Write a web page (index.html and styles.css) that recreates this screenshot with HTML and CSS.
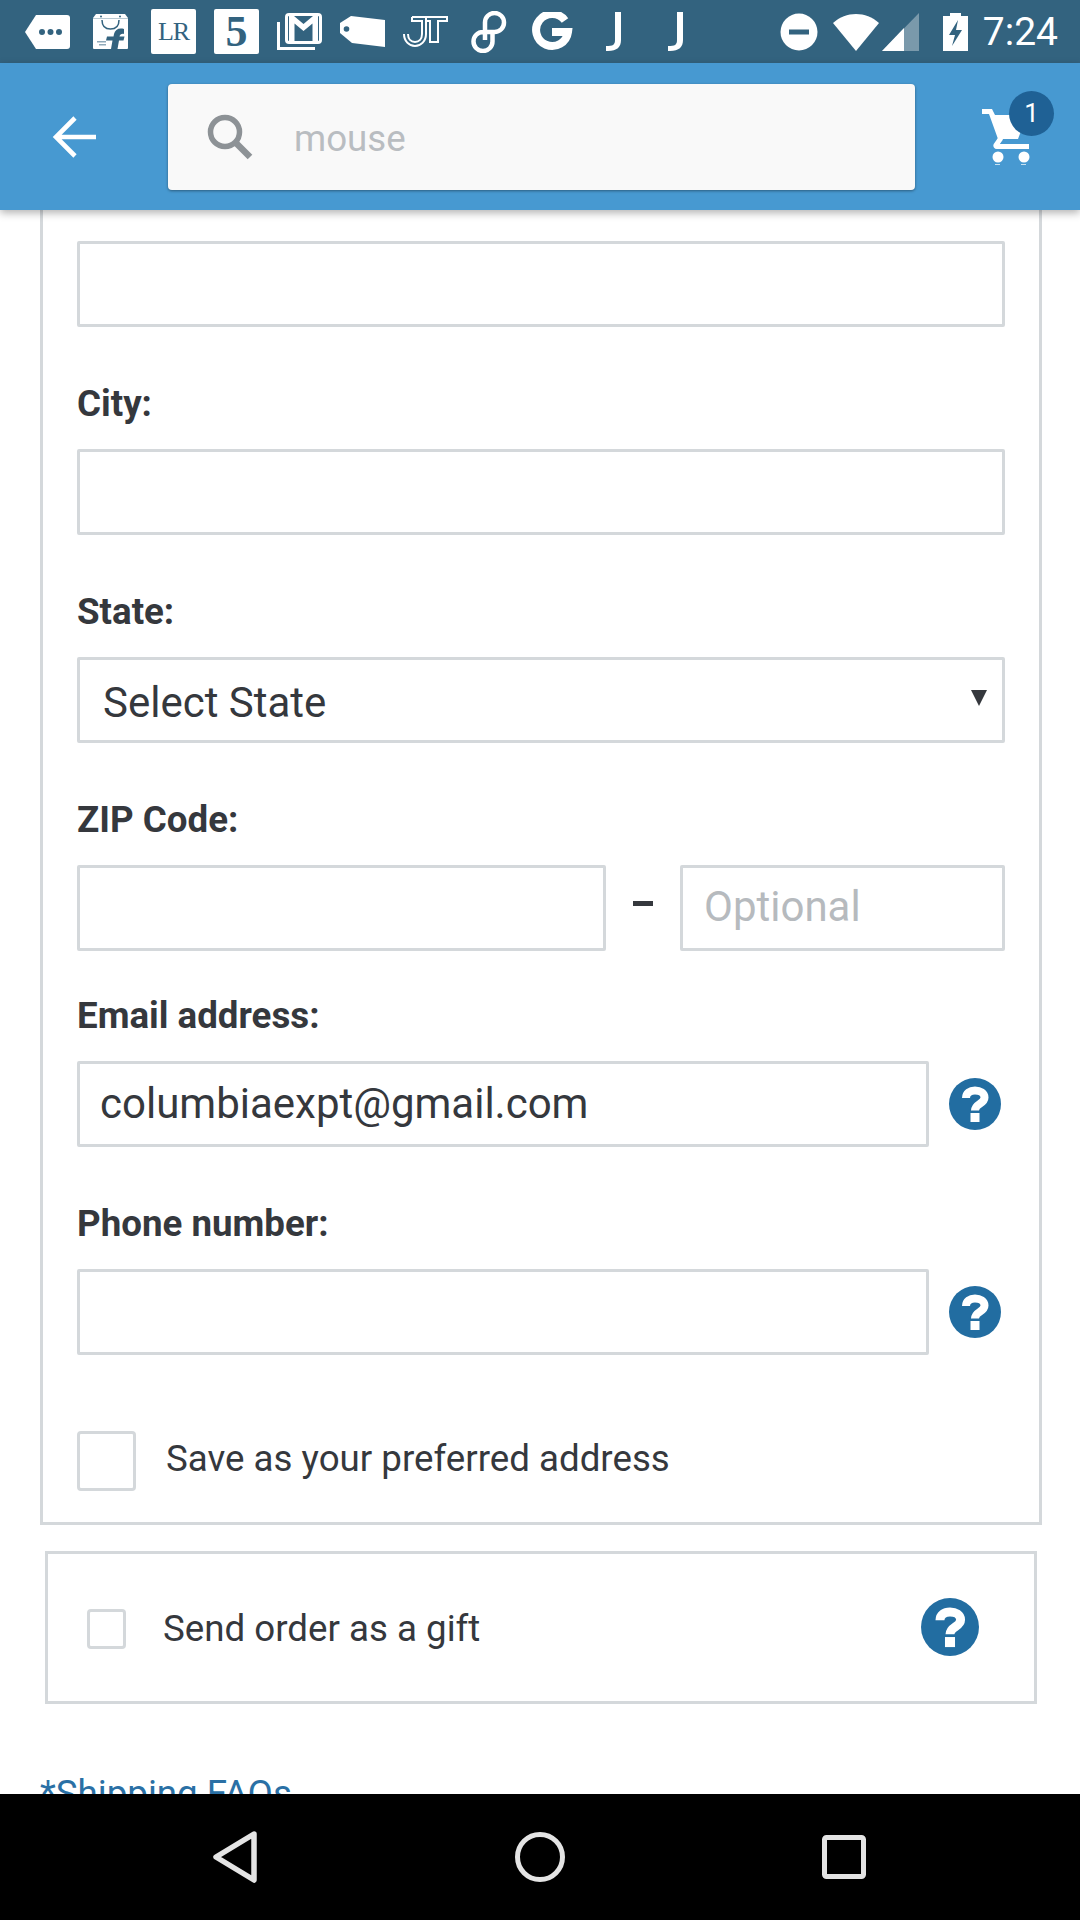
FILE: index.html
```html
<!DOCTYPE html>
<html lang="en">
<head>
<meta charset="utf-8">
<title>Shipping address</title>
<link rel="stylesheet" href="styles.css">
</head>
<body>
<div class="screen">
  <div class="statusbar">
    <div class="notifs">
      <span class="slot"><svg width="45" height="34" viewBox="0 0 45 34"><path d="M0 17 11 0h31a3 3 0 0 1 3 3v28a3 3 0 0 1-3 3H11z" fill="#fff"/><circle cx="17" cy="17" r="3" fill="#33637f"/><circle cx="25.500" cy="17" r="3" fill="#33637f"/><circle cx="34" cy="17" r="3" fill="#33637f"/></svg></span>
      <span class="slot"><svg width="35" height="35" viewBox="0 0 35 35"><path d="M3 0h29l3 4v30a1 1 0 0 1-1 1H1a1 1 0 0 1-1-1V4z" fill="#fff"/><path d="M0 4h35v1H0z" fill="#33637f" opacity=".35"/><circle cx="8" cy="2.500" r="1" fill="#33637f"/><circle cx="27" cy="2.500" r="1" fill="#33637f"/><path d="M9 6c0 6 3.500 9 8.500 9s8.500-3 8.500-9" fill="none" stroke="#33637f" stroke-width="1.500"/><path d="M31 15c-5-1.500-9 .5-10 5l-.5 2.500H14l-1 4h6.500L18 35h6.500l1.500-8.500h4.500l1-4H26.500c.5-2 2-3 4.500-2.500z" fill="#33637f"/><path d="M4 27h9v1.500H4zM6 30h7v1.500H6z" fill="#33637f" opacity=".55"/></svg></span>
      <span class="slot"><span class="tile tile-lr">LR</span></span>
      <span class="slot"><span class="tile tile-five">5</span></span>
      <span class="slot"><svg width="45" height="37" viewBox="0 0 45 37"><path d="M1.500 9v26.500H38" fill="none" stroke="#fff" stroke-width="3"/><rect x="9.500" y="1.500" width="34" height="28" rx="2.500" fill="none" stroke="#fff" stroke-width="3"/><path d="M12 3h5l9.500 8L36 3h5v25h-5.500V10.500L26.500 18l-9-7.500V28H12z" fill="#fff"/></svg></span>
      <span class="slot"><svg width="45" height="31" viewBox="0 0 45 31"><path d="M11 0 45 4v27L12 27 0 17V7z" fill="#fff"/><circle cx="6.500" cy="13" r="2.800" fill="#33637f"/></svg></span>
      <span class="slot"><svg width="45" height="31" viewBox="0 0 45 31" fill="none" stroke="#fff" stroke-width="2"><path d="M1 18c0 7 5 12 11 12s11-5 11-12V1H9"/><path d="M5 18c0 5 3 8 7 8s7-3 7-8V5H9v-4"/><path d="M14 1h30v4H35v21h-8V5h-4"/></svg></span>
      <span class="slot"><svg width="36" height="42" viewBox="0 0 36 42" fill="none" stroke="#fff" stroke-width="4.500"><path d="M14 29V11.500a9.500 9.500 0 1 1 9.500 9.500H12a9.500 9.500 0 1 0 9.500 9.500V23"/></svg></span>
      <span class="slot"><svg width="42" height="40" viewBox="0 0 42 40"><path d="M34 8.500A16 16 0 1 0 37 20H21" fill="none" stroke="#fff" stroke-width="8"/></svg></span>
      <span class="slot slot-j"><svg width="15" height="39" viewBox="0 0 15 39"><path d="M9 0h6v28c0 7-4 11-13 11H0v-5c7 0 9-1 9-6z" fill="#fff"/></svg></span>
      <span class="slot slot-j"><svg width="15" height="39" viewBox="0 0 15 39"><path d="M9 0h6v28c0 7-4 11-13 11H0v-5c7 0 9-1 9-6z" fill="#fff"/></svg></span>
    </div>
    <div class="system">
      <svg class="sys-dnd" width="38" height="38" viewBox="0 0 38 38"><circle cx="19" cy="19" r="18.500" fill="#fff"/><rect x="9" y="16.500" width="20" height="5" fill="#33637f"/></svg>
      <svg class="sys-wifi" width="46" height="38" viewBox="0 0 46 38"><path d="M0 10C13-2 33-2 46 10L23 38z" fill="#fff"/></svg>
      <svg class="sys-signal" width="37" height="38" viewBox="0 0 37 38"><path d="M0 38 37 0v38z" fill="#fff" opacity=".35"/><path d="M0 38 22 15v23z" fill="#fff"/></svg>
      <svg class="sys-batt" width="25" height="38" viewBox="0 0 25 38"><path fill-rule="evenodd" d="M7 0h11v3h7v35H0V3h7zM15 7 6 22h6l-3 11 10-16h-6z" fill="#fff"/></svg>
      <span class="clock">7:24</span>
    </div>
  </div>

  <header class="appbar">
    <svg class="back" width="46" height="42" viewBox="0 0 46 42"><path d="M44 21H4M23 2 4 21l19 19" fill="none" stroke="#fff" stroke-width="4.600"/></svg>
    <div class="search">
      <svg class="search-icon" width="46" height="46" viewBox="0 0 46 46"><circle cx="18" cy="18" r="14.500" fill="none" stroke="#8d9296" stroke-width="5.500"/><path d="M28 28l15 15" stroke="#8d9296" stroke-width="6.500"/></svg>
      <span class="search-text">mouse</span>
    </div>
    <div class="cart">
      <svg width="48" height="56" viewBox="0 0 48 56"><path d="M0 0h10l3 6h32l-9 24H16L7 5H0z" fill="#fff"/><path d="M19 29l-5 7a1 1 0 0 0 1 1.500h32" fill="none" stroke="#fff" stroke-width="5"/><circle cx="16" cy="48" r="5.500" fill="#fff"/><circle cx="42" cy="48" r="5.500" fill="#fff"/><path d="M13 55h5v1h-5zM39 55h5v1h-5z" fill="#fff" opacity=".7"/></svg>
      <span class="badge">1</span>
    </div>
  </header>

  <main class="content">
    <section class="card">
      <div class="field first"><input class="input" type="text" aria-label="Address line 2"></div>
      <div class="field">
        <label class="label">City:</label>
        <input class="input" type="text">
      </div>
      <div class="field">
        <label class="label">State:</label>
        <div class="select-wrap">
          <select class="input select"><option>Select State</option></select>
          <span class="caret"></span>
        </div>
      </div>
      <div class="field field-zip">
        <label class="label">ZIP Code:</label>
        <div class="zip-row">
          <input class="input zip-main" type="text">
          <span class="dash"></span>
          <input class="input zip-opt" type="text" placeholder="Optional">
        </div>
      </div>
      <div class="field">
        <label class="label">Email address:</label>
        <div class="help-row">
          <input class="input email" type="text" value="columbiaexpt@gmail.com">
          <svg class="help" viewBox="0 0 52 52"><circle cx="26" cy="26" r="26" fill="#226da1"/><path d="M17 20c0-5 4-7.500 9-7.500s9.500 2.500 9.500 7c0 6.500-9.500 6-9.500 13" fill="none" stroke="#fff" stroke-width="8"/><rect x="21.500" y="35" width="9" height="9" fill="#fff"/></svg>
        </div>
      </div>
      <div class="field">
        <label class="label">Phone number:</label>
        <div class="help-row">
          <input class="input" type="text">
          <svg class="help" viewBox="0 0 52 52"><circle cx="26" cy="26" r="26" fill="#226da1"/><path d="M17 20c0-5 4-7.500 9-7.500s9.500 2.500 9.500 7c0 6.500-9.500 6-9.500 13" fill="none" stroke="#fff" stroke-width="8"/><rect x="21.500" y="35" width="9" height="9" fill="#fff"/></svg>
        </div>
      </div>
      <div class="pref">
        <span class="check check-lg"></span>
        <span class="check-text pref-text">Save as your preferred address</span>
      </div>
    </section>

    <section class="gift">
      <span class="check check-sm"></span>
      <span class="check-text gift-text">Send order as a gift</span>
      <svg class="help help-lg" viewBox="0 0 52 52"><circle cx="26" cy="26" r="26" fill="#226da1"/><path d="M17 20c0-5 4-7.500 9-7.500s9.500 2.500 9.500 7c0 6.500-9.500 6-9.500 13" fill="none" stroke="#fff" stroke-width="8"/><rect x="21.500" y="35" width="9" height="9" fill="#fff"/></svg>
    </section>

    <a class="faq">*Shipping FAQs</a>
  </main>

  <nav class="navbar">
    <svg width="46" height="52" viewBox="0 0 46 52"><path d="M42 3 4 26l38 23z" fill="none" stroke="#e4e4e4" stroke-width="5.500" stroke-linejoin="round"/></svg>
    <svg width="50" height="50" viewBox="0 0 50 50"><circle cx="25" cy="25" r="22.500" fill="none" stroke="#e4e4e4" stroke-width="5"/></svg>
    <svg width="44" height="44" viewBox="0 0 44 44"><rect x="2.500" y="2.500" width="39" height="39" rx="2" fill="none" stroke="#e4e4e4" stroke-width="5"/></svg>
  </nav>
</div>
</body>
</html>
```

FILE: styles.css
```css
* { box-sizing: border-box; }
html, body { margin: 0; padding: 0; background: #fff; }
body { font-family: Roboto, "Liberation Sans", sans-serif; color: #35383d; }

.screen {
  width: 1080px;
  height: 1920px;
  display: flex;
  flex-direction: column;
  overflow: hidden;
}

/* status bar */
.statusbar {
  height: 63px;
  flex: none;
  background: #33637f;
  display: flex;
  align-items: center;
  justify-content: space-between;
  padding: 0 22px 0 16px;
}
.notifs { display: flex; align-items: center; }
.slot { width: 63px; display: flex; justify-content: center; align-items: center; }
.slot svg { display: block; }
.slot-j { margin-left: -1px; }
.tile {
  width: 45px;
  height: 45px;
  background: #fff;
  border-radius: 2px;
  color: #33637f;
  display: flex;
  align-items: center;
  justify-content: center;
  font-family: "Liberation Serif", serif;
}
.tile-lr { font-size: 26px; letter-spacing: -1px; }
.tile-five { font-size: 44px; font-weight: 700; }
.system { display: flex; align-items: center; }
.sys-dnd { margin-right: 15px; }
.sys-wifi { margin-right: 3px; }
.sys-signal { margin-right: 24px; }
.sys-batt { margin-right: 15px; }
.clock { font-size: 39px; line-height: 44px; color: #fff; }

/* app bar */
.appbar {
  height: 147px;
  flex: none;
  background: #4799d1;
  display: flex;
  align-items: center;
  padding: 0 0 0 52px;
  box-shadow: 0 3px 8px rgba(0, 0, 0, .3);
  position: relative;
  z-index: 2;
}
.back { flex: none; margin-right: 70px; }
.search {
  width: 747px;
  height: 106px;
  background: #f9f9f9;
  border-radius: 4px;
  box-shadow: 0 1px 3px rgba(0, 0, 0, .4);
  display: flex;
  align-items: center;
  padding-left: 39px;
}
.search-icon { flex: none; margin-right: 41px; }
.search-text { font-size: 36.700px; color: #b9bdc1; padding-top: 4px; }
.cart { position: relative; margin-left: 67px; width: 48px; height: 56px; }
.cart svg { display: block; }
.badge {
  position: absolute;
  left: 27px;
  top: -18px;
  width: 45px;
  height: 45px;
  border-radius: 50%;
  background: #1f6195;
  color: #fff;
  font-size: 26px;
  display: flex;
  align-items: center;
  justify-content: center;
}

/* content */
.content { flex: 1; min-height: 0; overflow: hidden; padding: 0 38px 0 40px; }
.card {
  border: 3px solid #d4d8db;
  border-top: 0;
  padding: 0 34px 31px 34px;
}
.field { margin-bottom: 57px; }
.field.first { padding-top: 31px; }
.field-zip { margin-bottom: 45px; }
.label { display: block; font-size: 36.700px; font-weight: 700; line-height: 40px; margin-bottom: 25px; color: #35383d; }
.input {
  display: block;
  width: 100%;
  height: 86px;
  border: 3px solid #d4d8db;
  border-radius: 2px;
  background: #fff;
  font-family: Roboto, "Liberation Sans", sans-serif;
  font-size: 42px;
  color: #35383d;
  padding: 0 20px;
  outline: none;
  appearance: none;
}
.email { padding-bottom: 1px; }
.select-wrap { position: relative; }
.select { padding: 4px 23px 0; }
.caret {
  position: absolute;
  right: 18px;
  top: 33px;
  border-left: 8px solid transparent;
  border-right: 8px solid transparent;
  border-top: 16px solid #35383d;
}
.zip-row { display: flex; align-items: center; }
.zip-main { width: 529px; flex: none; }
.dash { width: 20px; height: 5px; background: #35383d; margin: 0 27px 10px; flex: none; }
.zip-opt { flex: 1; width: 0; min-width: 0; padding: 0 21px 3px; }
.zip-opt::placeholder { color: #b6babe; opacity: 1; }
.help-row { display: flex; align-items: center; }
.help-row .input { width: 852px; flex: none; }
.help { display: block; width: 52px; height: 52px; flex: none; margin-left: 20px; }
.pref { display: flex; align-items: center; margin-top: 76px; }
.check { display: block; flex: none; border: 3px solid #d4d8db; border-radius: 4px; background: #fff; }
.check-lg { width: 59px; height: 60px; margin-right: 30px; }
.check-sm { width: 39px; height: 40px; margin: 3px 37px 0 0; }
.check-text { font-size: 36.700px; color: #35383d; position: relative; }
.pref-text { top: -3px; }
.gift {
  display: flex;
  align-items: center;
  width: 992px;
  height: 153px;
  margin: 26px 0 0 5px;
  border: 3px solid #d4d8db;
  padding: 0 0 0 39px;
}
.gift-text { flex: 1; top: 1px; }
.help-lg { width: 58px; height: 58px; margin: -2px 55px 0 0; }
.faq { display: block; margin-top: 68px; font-size: 36.700px; color: #2a70a5; line-height: 44px; }

/* nav bar */
.navbar {
  height: 126px;
  flex: none;
  background: #000;
  display: flex;
  align-items: center;
  padding: 0 214px 0 212px;
  justify-content: space-between;
}
.navbar svg { display: block; }
```
